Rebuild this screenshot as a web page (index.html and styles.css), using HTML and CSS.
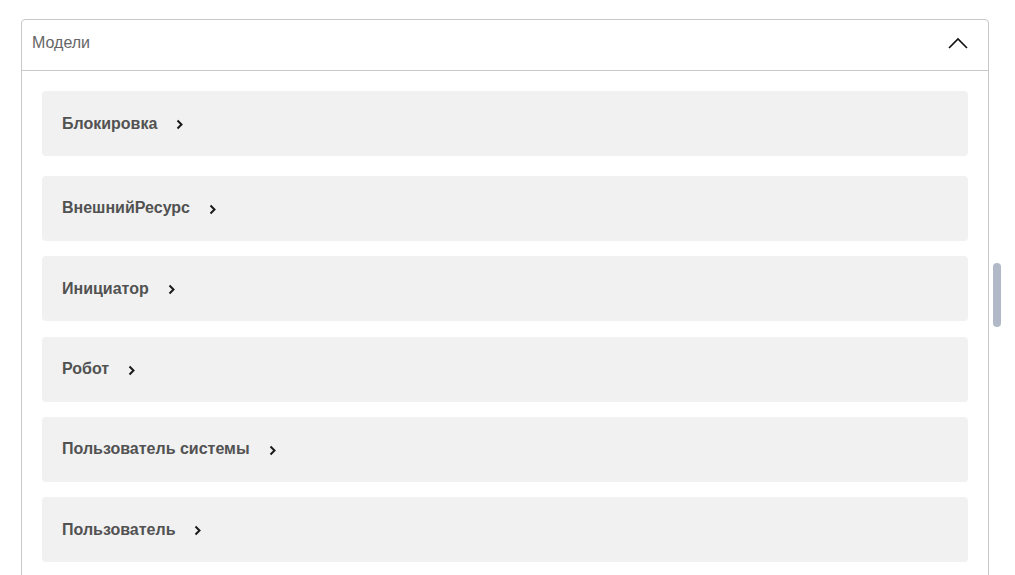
FILE: index.html
```html
<!DOCTYPE html>
<html lang="ru">
<head>
<meta charset="utf-8">
<link rel="stylesheet" href="styles.css">
</head>
<body>
<div class="page">
  <section class="panel">
    <header class="panel-head">
      <span class="panel-title">Модели</span>
      <svg class="chev-up" width="20" height="12" viewBox="0 0 20 12"><path d="M1 11 L10 2 L19 11" fill="none" stroke="#111" stroke-width="1.6"/></svg>
    </header>
    <div class="panel-body">
      <div class="item first"><span class="item-name">Блокировка</span><svg class="chev" width="8" height="11" viewBox="0 0 8 11"><path d="M1.5 1.5 L5.5 5.5 L1.5 9.5" fill="none" stroke="#1a1a1a" stroke-width="2"/></svg></div>
      <div class="item"><span class="item-name">ВнешнийРесурс</span><svg class="chev" width="8" height="11" viewBox="0 0 8 11"><path d="M1.5 1.5 L5.5 5.5 L1.5 9.5" fill="none" stroke="#1a1a1a" stroke-width="2"/></svg></div>
      <div class="item"><span class="item-name">Инициатор</span><svg class="chev" width="8" height="11" viewBox="0 0 8 11"><path d="M1.5 1.5 L5.5 5.5 L1.5 9.5" fill="none" stroke="#1a1a1a" stroke-width="2"/></svg></div>
      <div class="item"><span class="item-name">Робот</span><svg class="chev" width="8" height="11" viewBox="0 0 8 11"><path d="M1.5 1.5 L5.5 5.5 L1.5 9.5" fill="none" stroke="#1a1a1a" stroke-width="2"/></svg></div>
      <div class="item"><span class="item-name">Пользователь системы</span><svg class="chev" width="8" height="11" viewBox="0 0 8 11"><path d="M1.5 1.5 L5.5 5.5 L1.5 9.5" fill="none" stroke="#1a1a1a" stroke-width="2"/></svg></div>
      <div class="item"><span class="item-name">Пользователь</span><svg class="chev" width="8" height="11" viewBox="0 0 8 11"><path d="M1.5 1.5 L5.5 5.5 L1.5 9.5" fill="none" stroke="#1a1a1a" stroke-width="2"/></svg></div>
    </div>
  </section>
  <div class="scroll-thumb"></div>
</div>
</body>
</html>
```

FILE: styles.css
```css
html, body {
  margin: 0;
  padding: 0;
  height: 100%;
  overflow: hidden;
  background: #fff;
}
body {
  font-family: "Liberation Sans", Arial, sans-serif;
}
.page {
  position: relative;
  padding: 19px 26px 0 21px;
  height: 100%;
  box-sizing: border-box;
}
.panel {
  border: 1px solid #c8c8c8;
  border-radius: 4px;
  background: #fff;
}
.panel-head {
  height: 50px;
  display: flex;
  align-items: center;
  justify-content: space-between;
  padding: 0 20px 0 10px;
  border-bottom: 1px solid #c8c8c8;
}
.panel-title {
  font-size: 16px;
  color: #666;
  position: relative;
  top: -2px;
}
.chev-up {
  display: block;
  position: relative;
  top: -2px;
}
.panel-body {
  padding: 20px 20px 60px 20px;
  display: flex;
  flex-direction: column;
  gap: 15.34px;
}
.item {
  height: 65px;
  background: #f1f1f1;
  border-radius: 4px;
  display: flex;
  align-items: center;
  padding: 0 20px;
  gap: 19px;
  flex-shrink: 0;
}
.item.first {
  margin-bottom: 4.66px;
}
.item-name {
  font-size: 16px;
  font-weight: bold;
  color: #525252;
}
.chev {
  display: block;
  position: relative;
  top: 1px;
}
.scroll-thumb {
  position: absolute;
  left: 993px;
  top: 263px;
  width: 8px;
  height: 64px;
  border-radius: 4px;
  background: #b1b9c9;
}
```
